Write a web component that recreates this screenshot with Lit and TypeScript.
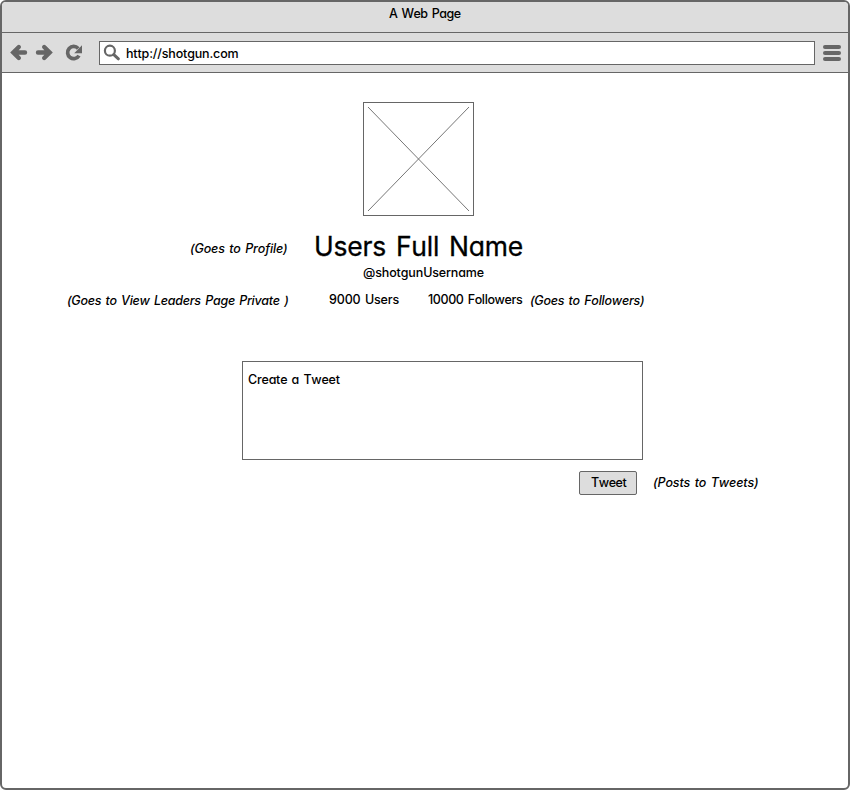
import { LitElement, html, css } from "lit";
import { customElement, property } from "lit/decorators.js";

/** A single line of text, tracked so that it fills the given measure. */
@customElement("fit-text")
class FitText extends LitElement {
  @property({ type: Number }) measure = 0;
  @property() text = "";

  static styles = css`
    :host {
      display: block;
      flex: none;
      white-space: pre;
      height: 16px;
      padding-top: 1px;
    }
    .line {
      display: inline-block;
      vertical-align: top;
      font-kerning: none;
      word-spacing: 0.1em;
    }
  `;

  async firstUpdated() {
    const line = this.renderRoot.querySelector<HTMLElement>(".line")!;
    const fit = () => {
      line.style.letterSpacing = "0px";
      const gap = (this.measure - line.getBoundingClientRect().width) / this.text.length;
      line.style.letterSpacing = `${gap}px`;
    };
    fit();
    await document.fonts.ready;
    fit();
  }

  render() {
    return html`<span class="line">${this.text}</span>`;
  }
}

@customElement("app-root")
class AppRoot extends LitElement {
  static styles = css`
    :host {
      display: block;
      height: 790px;
      font: 500 12.5px/16px Inter, "Open Sans", sans-serif;
      font-feature-settings: "cv11", "ss03";
      color: #000;
      background: #fff;
    }
    * {
      box-sizing: border-box;
    }
    .window {
      height: 790px;
      border: 2px solid #666;
      border-radius: 6px;
      overflow: hidden;
      background: #fff;
    }
    .title {
      height: 31px;
      background: #ddd;
      border-bottom: 1px solid #666;
      padding: 3px 0 0 387px;
    }
    .bar {
      height: 40px;
      background: #ddd;
      border-bottom: 1px solid #666;
      display: flex;
      align-items: center;
    }
    svg {
      display: block;
      flex: none;
    }
    .nav {
      width: 97px;
      height: 39px;
    }
    .url {
      width: 716px;
      height: 24px;
      border: 1px solid #666;
      background: #fff;
      display: flex;
      padding-top: 3px;
    }
    .lens {
      width: 26px;
      height: 22px;
      margin-top: -3px;
    }
    .menu {
      width: 18px;
      margin-left: 8px;
      display: grid;
      gap: 2px;
    }
    .menu i {
      height: 4px;
      border-radius: 2px;
      background: #666;
    }
    .picture {
      width: 111px;
      height: 114px;
      margin: 29px 0 0 361px;
      border: 1px solid #666;
    }
    .row {
      display: flex;
      align-items: flex-start;
    }
    .note {
      font-style: italic;
    }
    .name-row {
      height: 34px;
      margin: 14px 0 0 188px;
    }
    .name-row .note {
      margin-top: 10px;
      width: 124px;
    }
    .name {
      height: 34px;
      margin-top: -1px;
      padding-top: 0;
      font-size: 26.5px;
      line-height: 34px;
      font-weight: 400;
      -webkit-text-stroke: 0.3px #000;
    }
    .handle {
      margin: 0 0 0 361px;
    }
    .stats {
      margin: 11px 0 0 65px;
    }
    .stats .note {
      margin-top: 1px;
    }
    .leaders {
      width: 262px;
    }
    .users {
      width: 99px;
    }
    .followers {
      width: 102px;
    }
    .compose {
      width: 401px;
      height: 99px;
      margin: 53px 0 0 240px;
      border: 1px solid #666;
      padding: 9px 0 0 5px;
    }
    .actions {
      margin: 11px 0 0 577px;
    }
    .button {
      width: 58px;
      height: 24px;
      border: 1px solid #666;
      border-radius: 2px;
      background: #ddd;
      padding: 2px 0 0 11px;
      margin-right: 16px;
    }
    .actions .note {
      margin-top: 3px;
    }
  `;

  render() {
    return html`
      <div class="window">
        <div class="title"><fit-text text="A Web Page" measure="71.5"></fit-text></div>
        <div class="bar">
          <svg class="nav" viewBox="2 33 97 39" fill="none" stroke="#666">
            <path d="M18.8 47L13.3 52.5L18.8 58M14 52.5H25" stroke-width="4.4" stroke-linecap="round" />
            <path d="M44.2 47L49.7 52.5L44.2 58M49 52.5H38" stroke-width="4.4" stroke-linecap="round" />
            <path d="M78.2 48.4A6.1 6.1 0 1 0 79 55.6" stroke-width="3.7" />
            <path d="M82 45.2V53.2H74.2Z" fill="#666" stroke="none" />
          </svg>
          <div class="url">
            <svg class="lens" viewBox="100 42 26 22" fill="none" stroke="#666">
              <circle cx="109.9" cy="50.7" r="5" stroke-width="2.2" />
              <path d="M113.8 54.6L118.4 58.8" stroke-width="3" stroke-linecap="round" />
            </svg>
            <fit-text text="http://shotgun.com" measure="112.5"></fit-text>
          </div>
          <div class="menu"><i></i><i></i><i></i></div>
        </div>
        <svg class="picture" viewBox="364 103 109 112" stroke="#666" stroke-width="0.9">
          <path d="M368 107L469 211M469 107L368 211" />
        </svg>
        <div class="row name-row">
          <fit-text class="note" text="(Goes to Profile)" measure="97.5"></fit-text>
          <fit-text class="name" text="Users Full Name" measure="209"></fit-text>
        </div>
        <fit-text class="handle" text="@shotgunUsername" measure="121"></fit-text>
        <div class="row stats">
          <fit-text class="note leaders" text="(Goes to View Leaders Page Private )" measure="221.5"></fit-text>
          <fit-text class="users" text="9000 Users" measure="70"></fit-text>
          <fit-text class="followers" text="10000 Followers" measure="94.3"></fit-text>
          <fit-text class="note" text="(Goes to Followers)" measure="114.3"></fit-text>
        </div>
        <div class="compose"><fit-text text="Create a Tweet" measure="91.7"></fit-text></div>
        <div class="row actions">
          <div class="button"><fit-text text="Tweet" measure="35.3"></fit-text></div>
          <fit-text class="note" text="(Posts to Tweets)" measure="105.5"></fit-text>
        </div>
      </div>
    `;
  }
}
